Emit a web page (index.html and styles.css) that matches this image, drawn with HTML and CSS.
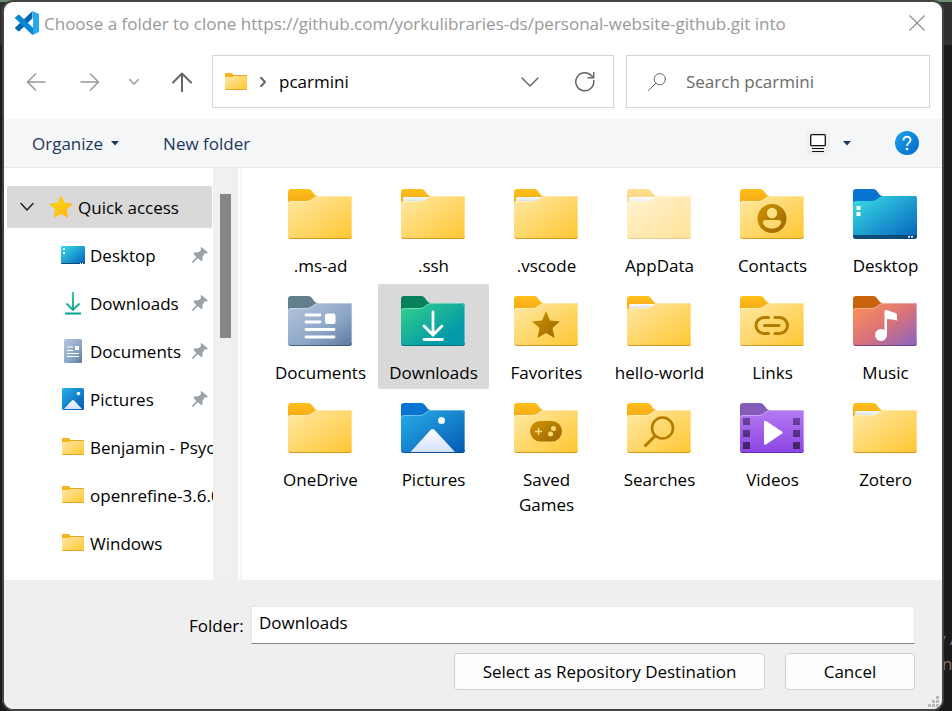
FILE: index.html
```html
<!DOCTYPE html>
<html lang="en">
<head>
<meta charset="utf-8">
<title>Choose a folder</title>
<link rel="stylesheet" href="styles.css">
</head>
<body>
<svg class="defs" aria-hidden="true">
  <defs>
    <linearGradient id="g-yellow" x1="0" y1="0" x2="1" y2="1"><stop offset="0" stop-color="#ffe9a6"/><stop offset="1" stop-color="#ffc631"/></linearGradient>
    <linearGradient id="g-tab" x1="0" y1="0" x2="0" y2="1"><stop offset="0" stop-color="#ffc01a"/><stop offset=".3" stop-color="#f8b017"/></linearGradient>
    <linearGradient id="g-brown" x1="0" y1="0" x2="1" y2="1"><stop offset="0" stop-color="#cf9500"/><stop offset="1" stop-color="#9b6500"/></linearGradient>
    <linearGradient id="g-paper" x1="0" y1="0" x2="0" y2="1"><stop offset="0" stop-color="#fff"/><stop offset="1" stop-color="#d9dfe6"/></linearGradient>
    <linearGradient id="g-slate" x1="0" y1="0" x2="1" y2="1"><stop offset="0" stop-color="#b6c6dd"/><stop offset=".6" stop-color="#8ba5c6"/><stop offset="1" stop-color="#5c7a9d"/></linearGradient>
    <linearGradient id="g-green" x1="0" y1="0" x2="1" y2="1"><stop offset="0" stop-color="#35d08a"/><stop offset=".75" stop-color="#029aa8"/></linearGradient>
    <linearGradient id="g-desk" x1="0" y1="0" x2="1" y2="1"><stop offset="0" stop-color="#39dfe4"/><stop offset="1" stop-color="#0660bd"/></linearGradient>
    <linearGradient id="g-music" x1="0" y1="0" x2="1" y2="1"><stop offset="0" stop-color="#ff9350"/><stop offset=".5" stop-color="#db7378"/><stop offset="1" stop-color="#8863c3"/></linearGradient>
    <linearGradient id="g-pic" x1="0" y1="0" x2="1" y2="1"><stop offset="0" stop-color="#27aeea"/><stop offset="1" stop-color="#0459b0"/></linearGradient>
    <linearGradient id="g-video" x1="0" y1="0" x2="0" y2="1"><stop offset="0" stop-color="#b57af2"/><stop offset="1" stop-color="#8b45e4"/></linearGradient>
    <linearGradient id="g-peak" x1="0" y1="0" x2="0" y2="1"><stop offset="0" stop-color="#fff"/><stop offset="1" stop-color="#d4e1ff"/></linearGradient>
    <linearGradient id="g-hole" x1="0" y1="0" x2="0" y2="1"><stop offset="0" stop-color="#6b429d"/><stop offset="1" stop-color="#3d2460"/></linearGradient>
    <linearGradient id="g-star" x1="0" y1="0" x2="1" y2="1"><stop offset="0" stop-color="#ffdc0f"/><stop offset="1" stop-color="#fcb314"/></linearGradient>
    <linearGradient id="g-help" x1="0" y1="0" x2="1" y2="1"><stop offset="0" stop-color="#1ca4e8"/><stop offset="1" stop-color="#0068cd"/></linearGradient>
    <linearGradient id="g-arrow" x1="0" y1="0" x2="0" y2="1"><stop offset="0" stop-color="#35c98a"/><stop offset="1" stop-color="#069f98"/></linearGradient>
  </defs>
  <symbol id="tab" viewBox="0 0 64 51"><path d="M0 3Q0 0 3 0H20C25 0 25 7 30 7H61Q64 7 64 10V30H0Z"/></symbol>
  <symbol id="front" viewBox="0 0 64 51"><path d="M0 15Q0 12 3 12H19Q22 12 24 10L26 8.500Q28 7 30 7H61Q64 7 64 10V47Q64 50 61 50H3Q0 50 0 47Z"/></symbol>
  <symbol id="edge" viewBox="0 0 64 51"><path d="M.5 15Q.5 12.500 3 12.500H19Q22 12.500 24 10.500L26 9Q28 7.500 30 7.500H61Q63.500 7.500 63.500 10V47" fill="none" stroke="#fff" stroke-opacity=".35"/><path d="M0 46.500Q0 50 3 50H61Q64 50 64 46.500Q64 49 61 49H3Q0 49 0 46.500Z" fill-opacity=".65"/></symbol>
  <symbol id="folder" viewBox="0 0 64 51"><use href="#tab" fill="url(#g-tab)"/><use href="#front" fill="url(#g-yellow)"/><use href="#edge" fill="#c07a00"/></symbol>
  <symbol id="folder-full" viewBox="0 0 64 51"><use href="#tab" fill="url(#g-tab)"/><use href="#front" fill="url(#g-yellow)"/><path d="M2 9.500Q2 8 3.500 8H28Q26 9 24 11Q23 12 20 12H2Z" fill="url(#g-paper)"/><use href="#edge" fill="#c07a00"/></symbol>
  <symbol id="folder-small" viewBox="0 0 22 18"><path d="M0 1Q0 0 1 0H7L8.500 2H21Q22 2 22 3V8H0Z" fill="#f9b31a"/><path d="M0 5Q0 4 1 4H7L9 3H21Q22 3 22 4V16Q22 17 21 17H1Q0 17 0 16Z" fill="url(#g-yellow)"/><path d="M9 2.500H21.500M.5 16.500H21.500" stroke="#e5a42b" fill="none"/></symbol>
  <symbol id="pin" viewBox="0 0 16 16"><path d="M9.500 0L16 5.500L14.500 6.500L13 6.300L10.500 9.500L10.500 13.500L9 14L5.800 11.200L1.500 15.500L0 15.800L.3 14.300L4.500 10L1.500 7L2.200 5.500L6.500 5.300L9.300 2.800L8.500 1Z" fill="#98a2aa"/></symbol>
  <symbol id="caret" viewBox="0 0 8 5"><path d="M0 0H8L4 4.500Z" fill="#1d365f"/></symbol>
</svg>

<div class="backdrop" aria-hidden="true"><span>y A</span><span class="inset">n</span></div>

<main class="dialog">
  <header class="titlebar">
    <svg class="icon-24" viewBox="0 0 24 24"><path d="M17.500 0V7.300L4.600 19.900Q3.800 20.600 3 20L.3 17.700Q-.3 17 .3 16.400Z" fill="#0067ab"/><path d="M.3 7.600Q-.3 7 .2 6.200L3 3.900Q3.800 3.400 4.600 4L18 16.700V24L16.800 23.500Z" fill="#0688d2"/><path d="M17.500 0L24 3V21L17.500 24Q18 23.500 18 22.500V1.500Q18 .5 17.500 0Z" fill="#27a9f2"/></svg>
    <h1 class="title">Choose a folder to clone https://github.com/yorkulibraries-ds/personal-website-github.git into</h1>
    <button class="plain close" aria-label="Close"><svg class="icon-16" viewBox="0 0 16 16"><path d="M.5.5L15.500 15.500M15.500.5L.5 15.500" stroke="#8c8c8c" stroke-width="1.200"/></svg></button>
  </header>

  <nav class="navbar">
    <div class="history">
      <button class="plain step" aria-label="Back"><svg class="icon-20" viewBox="0 0 20 20"><path d="M19 10H1.500M9.500 2L1.500 10L9.500 18" class="line muted"/></svg></button>
      <button class="plain step" aria-label="Forward"><svg class="icon-20" viewBox="0 0 20 20"><path d="M1 10H18.500M10.500 2L18.500 10L10.500 18" class="line muted"/></svg></button>
      <button class="plain recent" aria-label="Recent locations"><svg class="icon-10" viewBox="0 0 10 10"><path d="M.5 2.500L5 7L9.500 2.500" class="line muted"/></svg></button>
      <button class="plain up" aria-label="Up"><svg class="icon-20" viewBox="0 0 20 20"><path d="M10 20V1.500M1 10.500L10 1.500L19 10.500" class="line strong"/></svg></button>
    </div>
    <div class="address">
      <svg class="folder-22"><use href="#folder-small"/></svg>
      <svg class="icon-10 crumb-sep" viewBox="0 0 10 10"><path d="M3 .8L7 5L3 9.200" class="line strong"/></svg>
      <button class="plain crumb">pcarmini</button>
      <button class="plain tool" aria-label="Previous locations"><svg class="icon-18" viewBox="0 0 18 18"><path d="M1 5L9 13L17 5" class="line mid"/></svg></button>
      <button class="plain tool" aria-label="Refresh"><svg class="icon-20" viewBox="0 0 20 20"><path d="M18.700 8.500A9 9 0 1 1 16.500 3.800L18.500 5.500M18.700 0V5.700H13" class="line mid"/></svg></button>
    </div>
    <label class="search">
      <svg class="icon-18" viewBox="0 0 18 18"><circle cx="11.800" cy="6.200" r="5.600" class="line mid thin"/><path d="M7.800 10.200L.5 17.500" class="line mid thin"/></svg>
      <input type="search" placeholder="Search pcarmini" aria-label="Search pcarmini">
    </label>
  </nav>

  <div class="toolbar">
    <button class="plain command">Organize <svg class="caret"><use href="#caret"/></svg></button>
    <button class="plain command">New folder</button>
    <div class="views">
      <button class="plain view" aria-label="View"><svg class="icon-24" viewBox="0 0 24 24"><rect x="4.700" y="3.700" width="14.600" height="11" rx="1" fill="#fff" stroke="#111" stroke-width="1.300"/><path d="M6 17.500H18M6 20.500H18" stroke="#111" stroke-width="1.200"/></svg></button>
      <button class="plain" aria-label="More views"><svg class="caret"><use href="#caret"/></svg></button>
    </div>
    <button class="plain help" aria-label="Help"><svg class="icon-24" viewBox="0 0 24 24"><circle cx="12" cy="12" r="12" fill="url(#g-help)"/><path d="M8.500 9.500C8.500 4.500 15.500 4.700 15.500 9C15.500 11.800 12 12 12 15" fill="none" stroke="#fff" stroke-width="1.800"/><circle cx="12" cy="18" r="1.300" fill="#fff"/></svg></button>
  </div>

  <div class="content">
    <aside class="tree">
      <button class="plain node root"><svg class="icon-14" viewBox="0 0 14 14"><path d="M1 3.500L7 10L13 3.500" class="line dark"/></svg><svg class="icon-24" viewBox="0 0 24 24"><path d="M12 1L15.300 8.200L23 9.100L17.300 14.500L18.800 22.300L12 18.500L5.200 22.300L6.700 14.500L1 9.100L8.700 8.200Z" fill="url(#g-star)" stroke="#fcc21a" stroke-linejoin="round"/></svg><span>Quick access</span></button>
      <button class="plain node"><svg class="icon-24" viewBox="0 0 24 24"><rect y="3" width="24" height="18" rx="1" fill="url(#g-desk)"/><path d="M0 20H24Q24 21 23 21H1Q0 21 0 20Z" fill="#0b4d79"/><path d="M2 5H4V7H2ZM2 9H4V11H2ZM19 20H20V21H19ZM21 20H22V21H21Z" fill="#fff"/></svg><span>Desktop</span><svg class="icon-16 pin"><use href="#pin"/></svg></button>
      <button class="plain node"><svg class="icon-24" viewBox="0 0 24 24"><path d="M12 1V18.500M5.500 12.500L12 19L18.500 12.500M4 22.500H20" fill="none" stroke="url(#g-arrow)" stroke-width="1.900"/></svg><span>Downloads</span><svg class="icon-16 pin"><use href="#pin"/></svg></button>
      <button class="plain node"><svg class="icon-24" viewBox="0 0 24 24"><rect x="3" width="18" height="24" rx="1.500" fill="url(#g-slate)"/><path d="M6 8H12M6 11.500H12M6 14.500H18M6 17.500H18" stroke="#fff" stroke-width="1.100"/><path d="M14 7H18V11H14Z" fill="#fff"/></svg><span>Documents</span><svg class="icon-16 pin"><use href="#pin"/></svg></button>
      <button class="plain node"><svg class="icon-24" viewBox="0 0 24 24"><rect x="1" y="1" width="22" height="22" rx="1.500" fill="url(#g-pic)"/><path d="M3 22L11 13.500Q12 12.500 13 13.500L21 22Z" fill="url(#g-peak)"/><circle cx="17.500" cy="6.500" r="1.800" fill="#fff"/></svg><span>Pictures</span><svg class="icon-16 pin"><use href="#pin"/></svg></button>
      <button class="plain node"><svg class="folder-22"><use href="#folder-small"/></svg><span>Benjamin - Psychology</span></button>
      <button class="plain node"><svg class="folder-22"><use href="#folder-small"/></svg><span>openrefine-3.6.0</span></button>
      <button class="plain node"><svg class="folder-22"><use href="#folder-small"/></svg><span>Windows</span></button>
    </aside>
    <div class="scrollbar"><div class="thumb"></div></div>
    <section class="files">
      <button class="plain file"><svg viewBox="0 0 64 51"><use href="#folder"/></svg><span>.ms-ad</span></button>
      <button class="plain file"><svg viewBox="0 0 64 51"><use href="#folder-full"/></svg><span>.ssh</span></button>
      <button class="plain file"><svg viewBox="0 0 64 51"><use href="#folder-full"/></svg><span>.vscode</span></button>
      <button class="plain file hidden-item"><svg viewBox="0 0 64 51"><use href="#folder-full"/></svg><span>AppData</span></button>
      <button class="plain file"><svg viewBox="0 0 64 51"><use href="#folder"/><circle cx="32" cy="29.500" r="14.500" fill="url(#g-brown)"/><circle cx="32" cy="24" r="5.200" fill="#ffdf83"/><path d="M25 31H39Q41 31 41 33C41 37 37 39.500 32 39.500S23 37 23 33Q23 31 25 31Z" fill="#ffda73"/></svg><span>Contacts</span></button>
      <button class="plain file"><svg viewBox="0 0 64 51"><use href="#tab" fill="#0873d1"/><use href="#front" fill="url(#g-desk)"/><path d="M0 46H64V47Q64 50 61 50H3Q0 50 0 47Z" fill="#0a4b78"/><path d="M3.500 17H7.500V21H3.500ZM3.500 23H7.500V27H3.500ZM55 47H57V48.500H55ZM58 47H60V48.500H58Z" fill="#fff"/></svg><span>Desktop</span></button>

      <button class="plain file"><svg viewBox="0 0 64 51"><use href="#tab" fill="#647f8c"/><use href="#front" fill="url(#g-slate)"/><use href="#edge" fill="#243f5d"/><path d="M18 19H32M18 26H32M18 33.500H46M18 41H46" stroke="#fff" stroke-width="2.800" stroke-linecap="round"/><rect x="37" y="17.500" width="10.500" height="10.500" rx="2" fill="#fff"/></svg><span>Documents</span></button>
      <button class="plain file selected"><svg viewBox="0 0 64 51"><use href="#tab" fill="#07805c"/><use href="#front" fill="url(#g-green)"/><use href="#edge" fill="#005d66"/><path d="M32 16V38M23 30L32 39L41 30M23 43.500H41.500" fill="none" stroke="#fff" stroke-width="2.800" stroke-linecap="round"/></svg><span>Downloads</span></button>
      <button class="plain file"><svg viewBox="0 0 64 51"><use href="#folder"/><path d="M32 15L36 24.500L46 25.500L38.500 32L40.500 42L32 37L23.500 42L25.500 32L18 25.500L28 24.500Z" fill="url(#g-brown)"/></svg><span>Favorites</span></button>
      <button class="plain file"><svg viewBox="0 0 64 51"><use href="#folder-full"/></svg><span>hello-world</span></button>
      <button class="plain file"><svg viewBox="0 0 64 51"><use href="#folder"/><path d="M28.500 21.500H24A8 8 0 0 0 24 37.500H28.500M35 21.500H39.500A8 8 0 0 1 39.500 37.500H35M24.500 29.500H39" fill="none" stroke="#b57b00" stroke-width="3" stroke-linecap="round"/></svg><span>Links</span></button>
      <button class="plain file"><svg viewBox="0 0 64 51"><use href="#tab" fill="#c9620d"/><use href="#front" fill="url(#g-music)"/><use href="#edge" fill="#502b67"/><circle cx="28" cy="39" r="6" fill="#fff"/><path d="M31.500 39V15Q32 13.500 33.500 14L42.500 17Q44 17.500 44 19V24.500Q39 23 34 23V39Z" fill="#fff"/></svg><span>Music</span></button>

      <button class="plain file"><svg viewBox="0 0 64 51"><use href="#folder"/></svg><span>OneDrive</span></button>
      <button class="plain file"><svg viewBox="0 0 64 51"><use href="#tab" fill="#0873d1"/><use href="#front" fill="url(#g-pic)"/><use href="#edge" fill="#003f83"/><path d="M9.500 49L29.500 27Q31.500 25 33.500 27L54 49Z" fill="url(#g-peak)"/><circle cx="40.500" cy="17.500" r="3.500" fill="#f0f4f8"/></svg><span>Pictures</span></button>
      <button class="plain file"><svg viewBox="0 0 64 51"><use href="#folder"/><rect x="16" y="18" width="32" height="20.500" rx="10.200" fill="url(#g-brown)"/><path d="M21 28.500H28M24.500 25V32" stroke="#ffdf83" stroke-width="1.300"/><circle cx="39.500" cy="25.500" r="2.500" fill="#ffdc78"/><circle cx="36.500" cy="31" r="2.500" fill="#ffdc78"/></svg><span class="wrap">Saved Games</span></button>
      <button class="plain file"><svg viewBox="0 0 64 51"><use href="#folder"/><circle cx="35.500" cy="25" r="10.500" fill="none" stroke="#b57b00" stroke-width="2.600"/><path d="M28 33L18.500 42.500" stroke="#b57b00" stroke-width="3" stroke-linecap="round"/></svg><span>Searches</span></button>
      <button class="plain file"><svg viewBox="0 0 64 51"><use href="#tab" fill="#835cbb"/><use href="#front" fill="url(#g-video)"/><use href="#edge" fill="#4c208c"/><path d="M3 15H10V22H3ZM3 27H10V34H3ZM3 39H10V46H3ZM53 15H60V22H53ZM53 27H60V34H53ZM53 39H60V46H53Z" fill="url(#g-hole)"/><path d="M24 19Q24 17 26 18L42 28.500Q43.500 29.500 42 30.500L26 41.500Q24 42.500 24 40.500Z" fill="#fff"/></svg><span>Videos</span></button>
      <button class="plain file"><svg viewBox="0 0 64 51"><use href="#folder-full"/></svg><span>Zotero</span></button>
    </section>
  </div>

  <footer class="footer">
    <div class="field">
      <label for="folder-name">Folder:</label>
      <input id="folder-name" type="text" value="Downloads">
    </div>
    <div class="actions">
      <button class="button primary">Select as Repository Destination</button>
      <button class="button">Cancel</button>
    </div>
    <svg class="grip" viewBox="0 0 11 11"><path d="M8 0H11V3H8ZM4 4H7V7H4ZM8 4H11V7H8ZM0 8H3V11H0ZM4 8H7V11H4ZM8 8H11V11H8Z" fill="#b9b9b9"/></svg>
  </footer>
</main>
</body>
</html>
```
FILE: styles.css
```css
* {
  box-sizing: border-box;
}

body {
  margin: 0;
  min-height: 100vh;
  display: flex;
  position: relative;
  padding: 2px 10px 2px 4px;
  background: linear-gradient(#6f8b70 2px, #303030 2px, #303030 45px, #1b1b1b 45px);
  font-family: "Open Sans", "Noto Sans", sans-serif;
  font-size: 17px;
  line-height: 25px;
  color: #000;
}

.defs {
  position: absolute;
  width: 0;
  height: 0;
}

.backdrop {
  position: absolute;
  right: 0;
  bottom: 35px;
  width: 15px;
  display: flex;
  flex-direction: column;
  overflow: hidden;
  white-space: nowrap;
  color: #777;
}

.inset {
  padding-left: 5px;
}

svg {
  display: block;
  flex: none;
}

.icon-10 { width: 10px; height: 10px; }
.icon-14 { width: 14px; height: 14px; }
.icon-16 { width: 16px; height: 16px; }
.icon-18 { width: 18px; height: 18px; }
.icon-20 { width: 20px; height: 20px; }
.icon-24 { width: 24px; height: 24px; }
.folder-22 { width: 22px; height: 18px; }
.caret { width: 8px; height: 5px; }

.line {
  fill: none;
  stroke-width: 1.5;
  stroke-linecap: round;
  stroke-linejoin: round;
}

.muted { stroke: #999; }
.mid { stroke: #666; }
.strong { stroke: #666; stroke-width: 2; }
.dark { stroke: #222; }
.thin { stroke-width: 1; }

.plain {
  display: flex;
  align-items: center;
  justify-content: center;
  padding: 0;
  border: 0;
  background: none;
  font: inherit;
  color: inherit;
}

.dialog {
  position: relative;
  flex: 1;
  min-width: 0;
  display: flex;
  flex-direction: column;
  overflow: hidden;
  border-radius: 9px;
  background: #fff;
  box-shadow: 0 0 0 2px #444;
}

.titlebar {
  display: flex;
  align-items: center;
  gap: 5px;
  height: 42px;
  padding: 0 17px 0 11px;
}

.title {
  flex: 1;
  margin: 0;
  overflow: hidden;
  white-space: nowrap;
  font-size: 17px;
  font-weight: 400;
  color: #999;
}

.navbar {
  display: flex;
  align-items: center;
  height: 75px;
  padding: 0 12px 0 5px;
}

.history {
  display: flex;
  height: 52px;
}

.step { width: 54px; }
.recent { width: 34px; }
.up { width: 61px; }

.address,
.search {
  display: flex;
  align-items: center;
  height: 53px;
  border: 1px solid #d6d6d6;
}

.address {
  flex: 1;
  min-width: 0;
  padding: 0 1px 0 12px;
}

.crumb-sep {
  margin: 0 11px;
}

.crumb {
  flex: 1;
  justify-content: flex-start;
}

.tool {
  width: 55px;
  height: 50px;
}

.search {
  width: 304px;
  gap: 20px;
  margin-left: 12px;
  padding: 0 21px;
}

.search input {
  flex: 1;
  min-width: 0;
  padding: 0;
  border: 0;
  outline: 0;
  background: none;
  font: inherit;
  color: #6a6a6a;
}

.search input::placeholder {
  color: #6a6a6a;
  opacity: 1;
}

.toolbar {
  display: flex;
  align-items: center;
  gap: 44px;
  height: 49px;
  padding: 0 23px 0 28px;
  border-bottom: 1px solid #e8e8e8;
  background: #f4f6f8;
  color: #1d365f;
}

.command {
  gap: 8px;
}

.views {
  display: flex;
  gap: 13px;
  margin-left: auto;
}

.view {
  border-radius: 4px;
  background: #f0f0f0;
}

.content {
  flex: 1;
  display: flex;
}

.tree {
  width: 209px;
  padding: 18px 0 0 3px;
  overflow: hidden;
}

.node {
  width: 206px;
  height: 42px;
  margin-bottom: 6px;
  padding: 0 5px 0 54px;
  gap: 5px;
  justify-content: flex-start;
  white-space: nowrap;
}

.node .folder-22 {
  margin: 0 1px;
}

.root {
  width: 205px;
  padding-left: 13px;
  border-radius: 2px;
  background: #d9d9d9;
}

.root .icon-14 {
  margin-right: 10px;
}

.pin {
  margin-left: auto;
}

.scrollbar {
  width: 25px;
  padding: 26px 7px 0;
  background: #f0f0f0;
}

.thumb {
  height: 144px;
  background: #868686;
}

.files {
  flex: 1;
  display: grid;
  grid-template-columns: repeat(auto-fill, 111px);
  gap: 2px;
  align-content: start;
  margin-left: 2px;
  padding: 9px 0 0 23px;
  border-left: 2px solid #f6f6f6;
}

.file {
  flex-direction: column;
  justify-content: flex-start;
  padding: 12px 10px 4px;
  gap: 13px;
  border-radius: 2px;
}

.file svg {
  width: 64px;
  height: 51px;
  margin-right: 1px;
}

.file span {
  white-space: nowrap;
}

.file .wrap {
  white-space: normal;
}

.hidden-item svg {
  opacity: 0.5;
}

.selected {
  background: #d9d9d9;
}

.footer {
  position: relative;
  padding: 26px 27px 19px;
  background: #efefef;
}

.field {
  display: flex;
  align-items: center;
  gap: 8px;
  padding-left: 158px;
}

.field label {
  width: 54px;
  text-align: right;
  flex: none;
  white-space: nowrap;
}

.field input {
  flex: 1;
  min-width: 0;
  height: 38px;
  padding: 0 7px 5px;
  border: 1px solid #e6e6e6;
  border-bottom-color: #868686;
  outline: 0;
  background: #fff;
  font: inherit;
}

.actions {
  display: flex;
  justify-content: flex-end;
  gap: 20px;
  margin-top: 9px;
}

.button {
  width: 130px;
  height: 37px;
  padding: 0;
  border: 1px solid #d0d0d0;
  border-radius: 4px;
  background: #fdfdfd;
  font: inherit;
  white-space: nowrap;
}

.primary {
  width: 311px;
}

.grip {
  position: absolute;
  right: 3px;
  bottom: 2px;
  width: 11px;
  height: 11px;
}
```
